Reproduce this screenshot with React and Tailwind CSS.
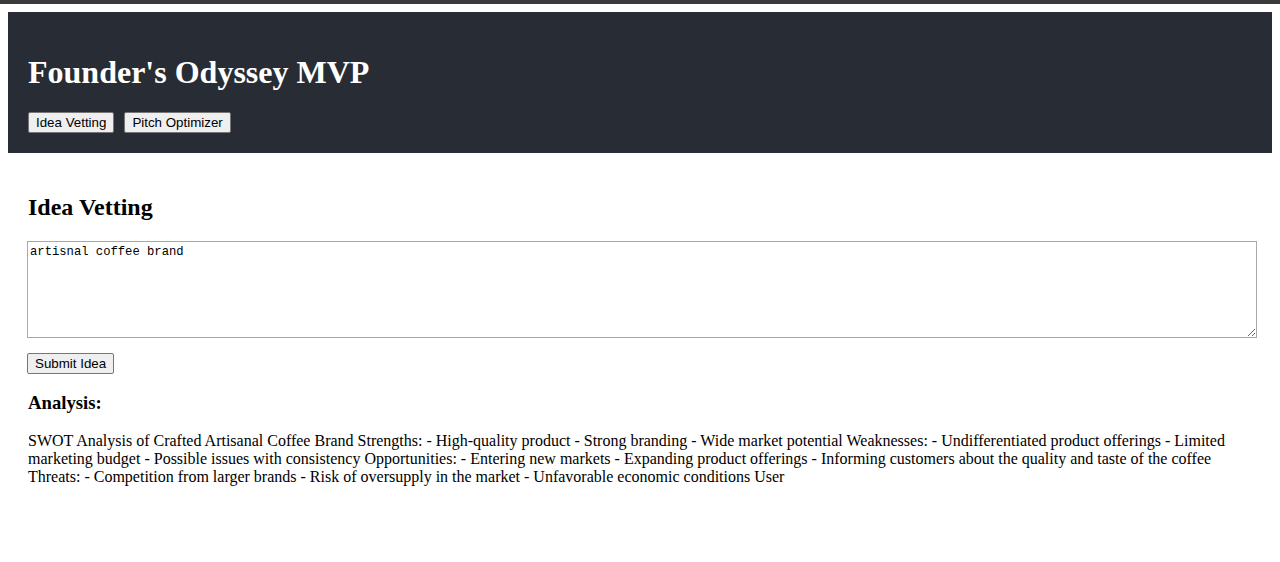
import React from 'react';

const NavButton = ({ children }) => (
  <button className="h-[21px] px-[7px] bg-[#efefef] border border-[#767676] rounded-[2px] text-[13.33px] leading-[17px] text-black font-['Liberation_Sans',Arial,sans-serif]">
    {children}
  </button>
);

const analysis =
  'SWOT Analysis of Crafted Artisanal Coffee Brand Strengths: - High-quality product - Strong branding - Wide market potential Weaknesses: - Undifferentiated product offerings - Limited marketing budget - Possible issues with consistency Opportunities: - Entering new markets - Expanding product offerings - Informing customers about the quality and taste of the coffee Threats: - Competition from larger brands - Risk of oversupply in the market - Unfavorable economic conditions User';

export default function App() {
  return (
    <div className="min-h-[562px] bg-white font-['Liberation_Serif','Times_New_Roman',serif] text-black">
      {/* top strip */}
      <div className="h-1 bg-[#3a3a3a]" />

      <div className="p-2 pt-2">
        {/* Header */}
        <header className="bg-[#282c34] px-5 py-5">
          <h1 className="text-[32px] leading-[37px] font-bold text-white my-[21.5px]">Founder's Odyssey MVP</h1>
          <div className="flex gap-[10px]">
            <NavButton>Idea Vetting</NavButton>
            <NavButton>Pitch Optimizer</NavButton>
          </div>
        </header>

        {/* Main */}
        <main className="px-5 pt-5">
          <h2 className="text-[24px] leading-[28px] font-bold mt-[20px] mb-[20px]">Idea Vetting</h2>
          <textarea
            defaultValue="artisnal coffee brand"
            className="block w-[1230px] h-[97px] -ml-px border border-[#a9a9a9] px-[2px] pt-[3px] pb-[2px] text-[12.2px] leading-[15px] font-['Liberation_Mono','DejaVu_Sans_Mono',monospace] resize-y outline-none"
          />
          <div className="mt-[13px] -ml-px">
            <NavButton>Submit Idea</NavButton>
          </div>
          <h3 className="text-[18.72px] leading-[21.5px] font-bold mt-[16.7px] mb-[19px]">Analysis:</h3>
          <p className="text-[16px] leading-[18px]">{analysis}</p>
        </main>
      </div>
    </div>
  );
}
